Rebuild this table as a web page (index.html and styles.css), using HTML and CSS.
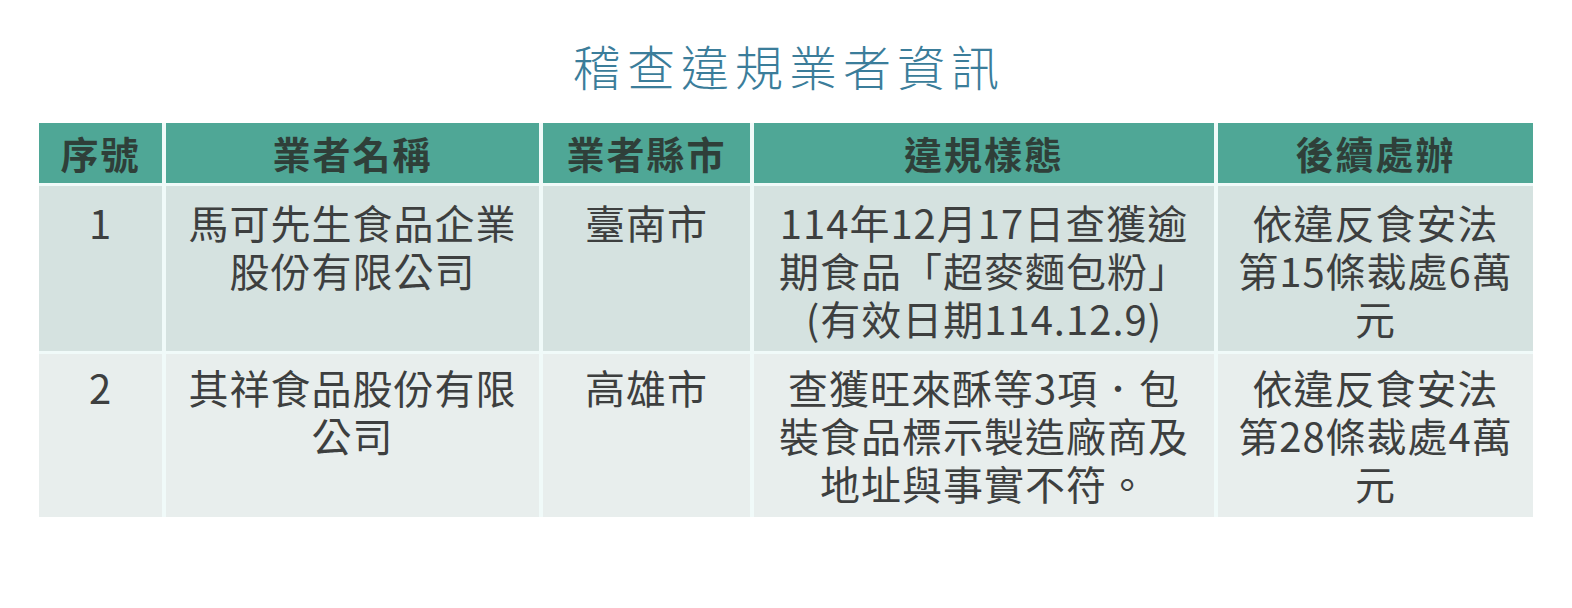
FILE: index.html
```html
<!DOCTYPE html>
<html lang="zh-Hant">
<head>
<meta charset="utf-8">
<title>稽查違規業者資訊</title>
<link rel="stylesheet" href="styles.css">
</head>
<body>
<main class="page">
  <h1 class="title">稽查違規業者資訊</h1>
  <div class="table">
    <div class="cell head">序號</div>
    <div class="cell head">業者名稱</div>
    <div class="cell head">業者縣市</div>
    <div class="cell head">違規樣態</div>
    <div class="cell head">後續處辦</div>

    <div class="cell odd">1</div>
    <div class="cell odd">馬可先生食品企業<br>股份有限公司</div>
    <div class="cell odd">臺南市</div>
    <div class="cell odd">114年12月17日查獲逾<br>期食品「超麥麵包粉」<br>(有效日期114.12.9)</div>
    <div class="cell odd">依違反食安法<br>第15條裁處6萬<br>元</div>

    <div class="cell even">2</div>
    <div class="cell even">其祥食品股份有限<br>公司</div>
    <div class="cell even">高雄市</div>
    <div class="cell even">查獲旺來酥等3項．包<br>裝食品標示製造廠商及<br>地址與事實不符。</div>
    <div class="cell even">依違反食安法<br>第28條裁處4萬<br>元</div>
  </div>
</main>
</body>
</html>
```
FILE: styles.css
```css
html, body {
  margin: 0;
  padding: 0;
  background: #ffffff;
}
body {
  width: 1572px;
  height: 608px;
  overflow: hidden;
  font-family: "Noto Sans CJK TC", "Noto Sans", sans-serif;
}
.page {
  display: flex;
  flex-direction: column;
  align-items: center;
  padding-top: 36px;
}
.title {
  margin: 0 0 0 6px;
  font-size: 48px;
  font-weight: 300;
  line-height: 58px;
  letter-spacing: 6px;
  color: #3b7d9a;
}
.table {
  margin-top: 29px;
  display: grid;
  grid-template-columns: 123px 373px 207px 460px 315px;
  grid-template-rows: 60px 165px 163px;
  column-gap: 4px;
  row-gap: 3px;
  background: #f0faf9;
}
.cell {
  text-align: center;
  white-space: nowrap;
  color: #3d3f3f;
  font-size: 40px;
  line-height: 48px;
  letter-spacing: 1px;
}
.head {
  background: #4fa796;
  color: #2f3f39;
  font-weight: 700;
  font-size: 38px;
  letter-spacing: 2px;
  display: flex;
  align-items: center;
  justify-content: center;
}
.odd {
  background: #d5e2e0;
  padding-top: 12px;
}
.even {
  background: #e8eeed;
  padding-top: 9px;
}
```
